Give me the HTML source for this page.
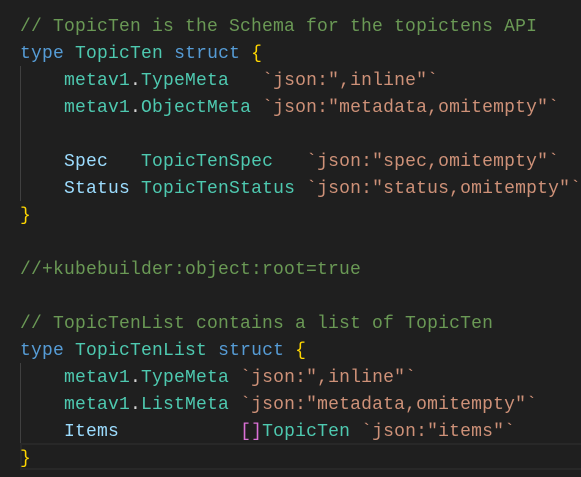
<!DOCTYPE html>
<html><head><style>
html,body{margin:0;padding:0;background:#1f1f1f;width:581px;height:477px;overflow:hidden}
pre{margin:0;padding:14px 0 0 20px;font-family:"Liberation Mono",monospace;font-size:18px;letter-spacing:0.2px;line-height:27px;color:#d4d4d4;position:relative;z-index:1}
.c{color:#6a9955}.k{color:#569cd6}.t{color:#4ec9b0}.s{color:#ce9178}.f{color:#9cdcfe}.b{color:#ffd700}.p{color:#da70d6}
.g{position:absolute;left:20px;width:1px;background:#404040}
.hl{position:absolute;left:20px;right:0;top:443px;height:23px;border:2px solid #282828;border-right:none}
</style></head><body>
<div class="g" style="top:66px;height:135px"></div>
<div class="g" style="top:363px;height:81px"></div>
<div class="hl"></div>
<pre><span class="c">// TopicTen is the Schema for the topictens API</span>
<span class="k">type</span> <span class="t">TopicTen</span> <span class="k">struct</span> <span class="b">{</span>
    <span class="t">metav1</span>.<span class="t">TypeMeta</span>   <span class="s">`json:",inline"`</span>
    <span class="t">metav1</span>.<span class="t">ObjectMeta</span> <span class="s">`json:"metadata,omitempty"`</span>

    <span class="f">Spec</span>   <span class="t">TopicTenSpec</span>   <span class="s">`json:"spec,omitempty"`</span>
    <span class="f">Status</span> <span class="t">TopicTenStatus</span> <span class="s">`json:"status,omitempty"`</span>
<span class="b">}</span>

<span class="c">//+kubebuilder:object:root=true</span>

<span class="c">// TopicTenList contains a list of TopicTen</span>
<span class="k">type</span> <span class="t">TopicTenList</span> <span class="k">struct</span> <span class="b">{</span>
    <span class="t">metav1</span>.<span class="t">TypeMeta</span> <span class="s">`json:",inline"`</span>
    <span class="t">metav1</span>.<span class="t">ListMeta</span> <span class="s">`json:"metadata,omitempty"`</span>
    <span class="f">Items</span>           <span class="p">[]</span><span class="t">TopicTen</span> <span class="s">`json:"items"`</span>
<span class="b">}</span></pre>
</body></html>
